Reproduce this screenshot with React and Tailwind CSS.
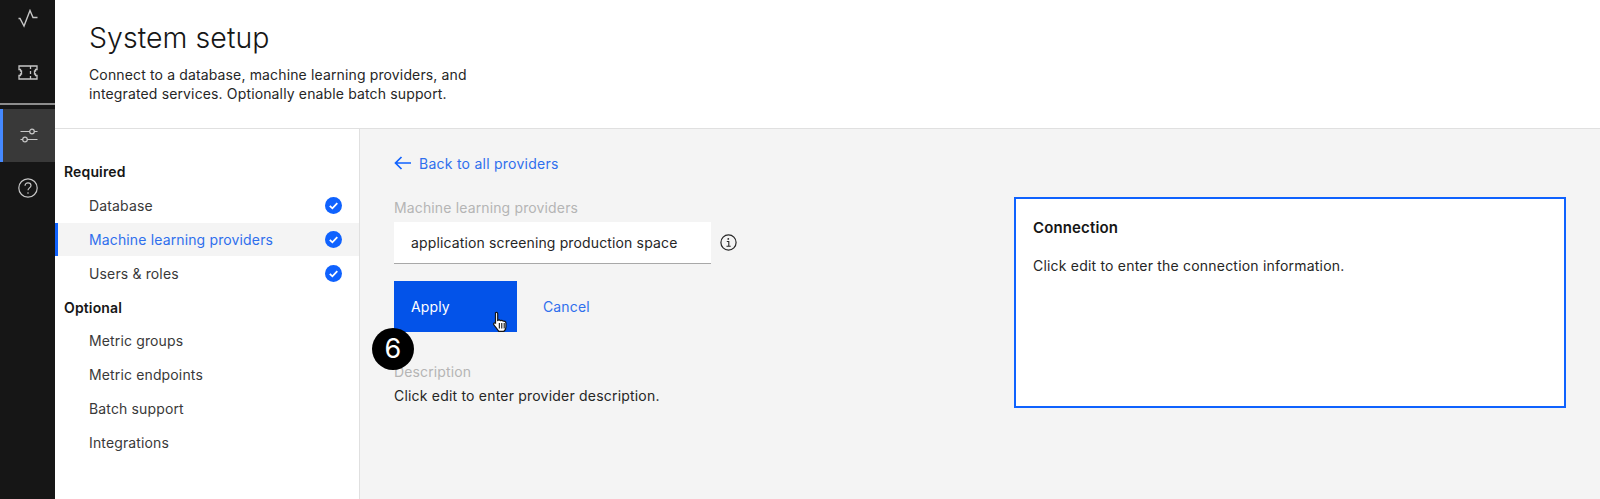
import React from 'react';

const font = "font-['Inter','Noto_Sans',sans-serif]";

const CheckBadge = () => (
    <svg width="17" height="17" viewBox="0 0 17 17" className="shrink-0">
        <circle cx="8.5" cy="8.5" r="8.5" fill="#0f62fe" />
        <path d="M4.8 8.8l2.6 2.5 4.9-5.2" fill="none" stroke="#fff" strokeWidth="1.8" />
    </svg>
);

const NavItem = ({ label, done, active }) => (
    <div className={`h-[33.8px] flex items-center justify-between pl-[31px] pr-[17px] border-l-[3px] ${active ? 'bg-[#f4f4f4] border-[#0f62fe] text-[#2f6fed]' : 'border-transparent text-[#393939]'}`}>
        <span>{label}</span>
        {done && <CheckBadge />}
    </div>
);

const App = () => {
    return (
        <div className={`${font} w-[1600px] h-[499px] flex overflow-hidden bg-white text-[14px] tracking-[0.14px] text-[#161616]`}>
            {/* Side rail */}
            <div className="w-[55px] shrink-0 bg-[#161616] flex flex-col">
                <div className="h-[36px] flex items-center justify-center">
                    <svg width="20" height="19" viewBox="0 0 20 19" fill="none" stroke="#c6c6c6" strokeWidth="1.4">
                        <path d="M0.500 9.500h1.500l4 7.500 6-15.500 3 7h4.500" />
                    </svg>
                </div>
                <div className="h-[67px] pt-[5px] flex items-center justify-center">
                    <svg width="20" height="15" viewBox="0 0 20 15" fill="none" stroke="#c6c6c6" strokeWidth="1.3">
                        <path d="M1 1h18v3.500h-1.500v1.500h-1v3h1v1.500H19V14H1v-3.500h1.500V9h1V6h-1V4.500H1z" />
                        <path d="M12.500 1v3M12.500 6v3M12.500 11v3" />
                    </svg>
                </div>
                <div className="h-[2px] bg-[#8d8d8d]" />
                <div className="h-[4px]" />
                <div className="h-[53px] bg-[#393939] border-l-[3px] border-[#4589ff] flex items-center justify-center pr-[1px]">
                    <svg width="18" height="15" viewBox="0 0 18 15" fill="none" stroke="#c6c6c6" strokeWidth="1.2">
                        <path d="M0.500 3.500h9.500M14 3.500h3.500M0.500 11.500h2.500M7 11.500h10.500" />
                        <circle cx="12" cy="3.500" r="2.300" />
                        <circle cx="5" cy="11.500" r="2.300" />
                    </svg>
                </div>
                <div className="h-[52px] flex items-center justify-center">
                    <svg width="20" height="20" viewBox="0 0 20 20" fill="none" stroke="#c6c6c6" strokeWidth="1.2">
                        <circle cx="10" cy="10" r="9.200" />
                        <path d="M7 7.800c0-1.800 1.400-3 3-3s3 1.100 3 2.800c0 2.300-3 2.300-3 4.700" />
                        <circle cx="10" cy="15" r="0.800" fill="#c6c6c6" stroke="none" />
                    </svg>
                </div>
            </div>

            <div className="flex-1 flex flex-col min-w-0">
                {/* Page header */}
                <div className="h-[129px] shrink-0 border-b border-[#e0e0e0] pl-[34px] pt-[18px]">
                    <h1 className="text-[28.5px] leading-[40px] font-light tracking-[0.05px]">System setup</h1>
                    <p className="mt-[7px] text-[#262626] leading-[19px] text-[14px]">
                        Connect to a database, machine learning providers, and<br />
                        integrated services. Optionally enable batch support.
                    </p>
                </div>

                <div className="flex-1 flex min-h-0">
                    {/* Left nav */}
                    <div className="w-[305px] shrink-0 border-r border-[#e0e0e0] pt-[26px]">
                        <div className="h-[33.8px] flex items-center pl-[9px] font-semibold">Required</div>
                        <NavItem label="Database" done />
                        <NavItem label="Machine learning providers" done active />
                        <NavItem label="Users & roles" done />
                        <div className="h-[33.8px] flex items-center pl-[9px] font-semibold">Optional</div>
                        <NavItem label="Metric groups" />
                        <NavItem label="Metric endpoints" />
                        <NavItem label="Batch support" />
                        <NavItem label="Integrations" />
                    </div>

                    {/* Main content */}
                    <div className="flex-1 bg-[#f4f4f4] flex pl-[34px] pt-[22px]">
                        <div className="w-[620px] shrink-0 relative">
                            <div className="h-[24px] flex items-center text-[#2f6fed] gap-[8px] tracking-[0.25px]">
                                <svg width="17" height="14" viewBox="0 0 17 14" fill="none" stroke="#0f62fe" strokeWidth="1.700">
                                    <path d="M17 7H1.500M7.500 1L1.500 7l6 6" />
                                </svg>
                                <span>Back to all providers</span>
                            </div>
                            <div className="mt-[23px] h-[20px] leading-[20px] text-[#b5b5b5]">Machine learning providers</div>
                            <div className="mt-[4px] flex items-center">
                                <div className="w-[317px] h-[42px] bg-white border-b border-[#a8a8a8] flex items-center pl-[17px] text-[#262626]">
                                    application screening production space
                                </div>
                                <svg width="17" height="17" viewBox="0 0 17 17" fill="none" stroke="#262626" className="ml-[9px] mb-[2px]">
                                    <circle cx="8.500" cy="8.500" r="7.600" strokeWidth="1.200" />
                                    <path d="M6.800 7.500h2v4.500M6.500 12.200h4.200" strokeWidth="1.100" />
                                    <circle cx="8.300" cy="4.900" r="0.900" fill="#262626" stroke="none" />
                                </svg>
                            </div>
                            <div className="mt-[17px] flex items-center">
                                <div className="w-[123px] h-[51px] bg-[#0353e9] text-white flex items-center pl-[17px]">Apply</div>
                                <span className="ml-[26px] text-[#2f6fed]">Cancel</span>
                            </div>
                            <div className="mt-[30px] h-[20px] leading-[20px] text-[#b5b5b5]">Description</div>
                            <div className="mt-[4px] leading-[20px] text-[#262626] tracking-[0.2px]">Click edit to enter provider description.</div>

                            {/* Step marker and pointer overlay */}
                            <div className="absolute left-[-22px] top-[177px] w-[42px] h-[42px] rounded-full bg-black text-white flex items-center justify-center text-[27px]">6</div>
                            <svg width="20" height="22" viewBox="0 0 18 20" className="absolute left-[97px] top-[160px]">
                                <path d="M4 1.500c1-.6 2 0 2 1v6c1-.5 2-.3 2.500.2 1-.4 2-.1 2.500.5 1-.3 2.500.3 2.500 1.800v3.500c0 2-1 3.500-2 4H7c-1-1.500-3-4-4.500-6-.8-1 .4-2.200 1.500-1.500V2.500c0-.4 0-.8 0-1z" fill="#fff" stroke="#161616" strokeWidth="1.100" />
                                <path d="M7.500 11v5M9.700 11v5M11.900 11v5" stroke="#161616" strokeWidth="1" />
                            </svg>
                        </div>

                        {/* Connection card */}
                        <div className="mt-[46px] w-[552px] h-[211px] bg-white border-2 border-[#0f62fe] pl-[17px] pt-[18px]">
                            <div className="font-semibold text-[15px] text-[#161616] leading-[22px]">Connection</div>
                            <div className="mt-[17px] leading-[20px] text-[#262626] tracking-[0.2px]">Click edit to enter the connection information.</div>
                        </div>
                    </div>
                </div>
            </div>
        </div>
    );
};

export default App;
